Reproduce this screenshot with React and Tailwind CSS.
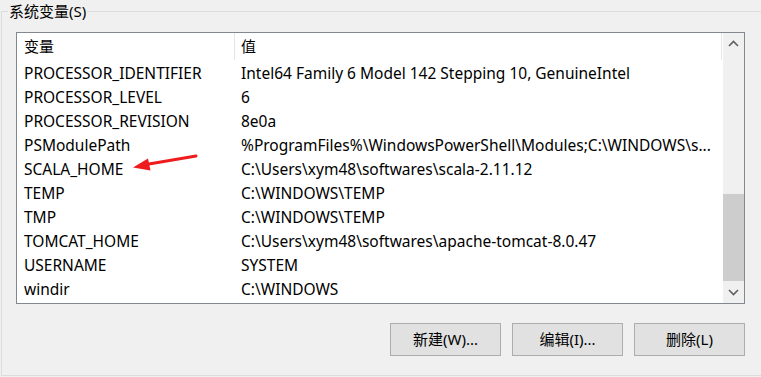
import React from "react";

const rows = [
  ["PROCESSOR_IDENTIFIER", "Intel64 Family 6 Model 142 Stepping 10, GenuineIntel"],
  ["PROCESSOR_LEVEL", "6"],
  ["PROCESSOR_REVISION", "8e0a"],
  ["PSModulePath", "%ProgramFiles%\\WindowsPowerShell\\Modules;C:\\WINDOWS\\s..."],
  ["SCALA_HOME", "C:\\Users\\xym48\\softwares\\scala-2.11.12"],
  ["TEMP", "C:\\WINDOWS\\TEMP"],
  ["TMP", "C:\\WINDOWS\\TEMP"],
  ["TOMCAT_HOME", "C:\\Users\\xym48\\softwares\\apache-tomcat-8.0.47"],
  ["USERNAME", "SYSTEM"],
  ["windir", "C:\\WINDOWS"],
];

function Chevron({ up }) {
  return (
    <svg width="11" height="7" viewBox="0 0 11 7">
      <path
        d={up ? "M1 6 L5.5 1.5 L10 6" : "M1 1 L5.5 5.5 L10 1"}
        fill="none"
        stroke="#606060"
        strokeWidth="1.6"
      />
    </svg>
  );
}

function Button({ children }) {
  return (
    <button className="w-[111px] h-[33px] border border-[#adadad] bg-[#e1e1e1] text-[15px] text-black">
      {children}
    </button>
  );
}

export default function App() {
  return (
    <div
      className="relative w-[761px] h-[377px] overflow-hidden bg-[#f0f0f0] text-black"
      style={{ fontFamily: '"Noto Sans", "Noto Sans CJK SC", sans-serif' }}
    >
      {/* group box */}
      <div className="relative mt-[11px] ml-[1px] w-[800px] h-[365px] border border-[#dcdcdc] pl-[14px] pt-[20px]">
        <div className="absolute left-[6px] top-[-11px] bg-[#f0f0f0] px-[1px] text-[15px] leading-[20px]">
          系统变量(S)
        </div>

        {/* list view */}
        <div className="flex w-[729px] h-[272px] border border-[#828790] bg-white">
          <div className="flex flex-col w-[706px]">
            <div className="flex h-[27px] text-[15px]">
              <div className="flex items-center w-[217px] pl-[7px]">变量</div>
              <div className="w-px bg-[#e5e5e5]" />
              <div className="flex items-center flex-1 pl-[6px]">值</div>
              <div className="w-px bg-[#e5e5e5]" />
              <div className="w-px" />
            </div>
            {rows.map(([name, value]) => (
              <div key={name} className="flex h-[24px] text-[15.5px] leading-[24px] pt-[1px] whitespace-nowrap">
                <div className="w-[218px] pl-[7px] overflow-hidden">{name}</div>
                <div className="flex-1 pl-[6px] overflow-hidden">{value}</div>
              </div>
            ))}
          </div>

          {/* scrollbar */}
          <div className="flex flex-col w-[21px] bg-[#f0f0f0]">
            <div className="flex items-center justify-center h-[21px]">
              <Chevron up />
            </div>
            <div className="h-[140px]" />
            <div className="h-[87px] bg-[#cdcdcd]" />
            <div className="flex items-center justify-center flex-1">
              <Chevron />
            </div>
          </div>
        </div>

        {/* buttons */}
        <div className="flex justify-end gap-[11px] w-[729px] mt-[19px]">
          <Button>新建(W)...</Button>
          <Button>编辑(I)...</Button>
          <Button>删除(L)</Button>
        </div>
      </div>

      {/* annotation arrow */}
      <svg className="absolute left-0 top-0" width="761" height="377" viewBox="0 0 761 377">
        <path d="M196 156 L146 164.5" stroke="#ee1c1c" strokeWidth="3" strokeLinecap="round" />
        <path d="M133 167.5 L148 158.5 L150.5 170.5 Z" fill="#ee1c1c" />
      </svg>
    </div>
  );
}
